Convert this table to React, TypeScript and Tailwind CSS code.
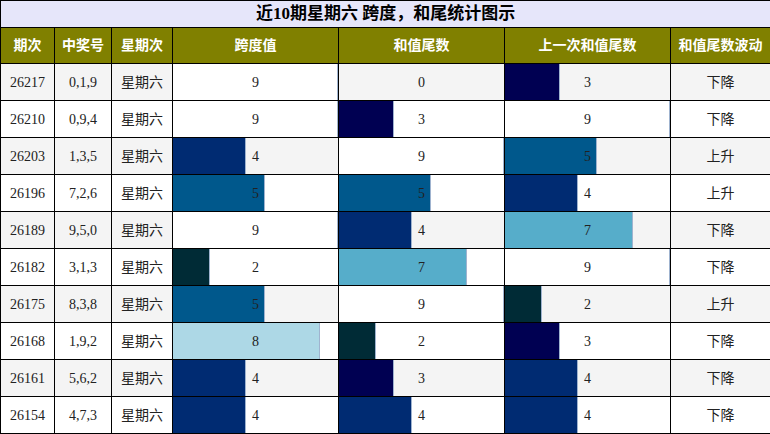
const rows: [string, string, number, number, number, string][] = [
  ["26217", "0,1,9", 9, 0, 3, "下降"],
  ["26210", "0,9,4", 9, 3, 9, "下降"],
  ["26203", "1,3,5", 4, 9, 5, "上升"],
  ["26196", "7,2,6", 5, 5, 4, "上升"],
  ["26189", "9,5,0", 9, 4, 7, "下降"],
  ["26182", "3,1,3", 2, 7, 9, "下降"],
  ["26175", "8,3,8", 5, 9, 2, "上升"],
  ["26168", "1,9,2", 8, 2, 3, "下降"],
  ["26161", "5,6,2", 4, 3, 4, "下降"],
  ["26154", "4,7,3", 4, 4, 4, "下降"],
]

// bar colour per digit
const barColors: Record<number, string> = {
  0: "bg-transparent",
  1: "bg-[#001f2a]",
  2: "bg-[#002b36]",
  3: "bg-[#000052]",
  4: "bg-[#002b72]",
  5: "bg-[#00588c]",
  6: "bg-[#1f7fae]",
  7: "bg-[#56adca]",
  8: "bg-[#add8e6]",
  9: "bg-white",
}

const font = "font-['Liberation_Serif','Noto_Sans_CJK_SC',serif]"

function BarCell({ value }: { value: number }) {
  return (
    <td className="border border-black p-0">
      <div className="relative h-[36px]">
        {value > 0 && (
          <div
            className={`absolute left-0 top-0 h-full border-r border-[#9fb3cf] ${barColors[value]}`}
            style={{ width: `${(value / 9) * 100}%` }}
          />
        )}
        <div className="relative flex h-full items-center justify-center">{value}</div>
      </div>
    </td>
  )
}

export default function App() {
  return (
    <div className={`w-[770px] h-[434px] bg-white ${font} text-[14px] text-[#222]`}>
      <table className="w-[770px] table-fixed border-collapse border border-black">
        <colgroup>
          <col className="w-[54px]" />
          <col className="w-[57px]" />
          <col className="w-[61px]" />
          <col className="w-[166px]" />
          <col className="w-[166px]" />
          <col className="w-[166px]" />
          <col className="w-[100px]" />
        </colgroup>
        <thead>
          <tr className="h-[27px] bg-[#e6e6fa]">
            <th colSpan={7} className="border border-black p-0 text-[17px] font-bold text-black">
              近10期星期六 跨度，和尾统计图示
            </th>
          </tr>
          <tr className="h-[36px] bg-[#808000] text-white">
            {["期次", "中奖号", "星期次", "跨度值", "和值尾数", "上一次和值尾数", "和值尾数波动"].map((h) => (
              <th key={h} className="border border-black p-0 text-[14px] font-bold">
                {h}
              </th>
            ))}
          </tr>
        </thead>
        <tbody>
          {rows.map((r, i) => (
            <tr key={r[0]} className={i % 2 === 0 ? "bg-[#f4f4f4]" : "bg-white"}>
              <td className="border border-black p-0 text-center">{r[0]}</td>
              <td className="border border-black p-0 text-center">{r[1]}</td>
              <td className="border border-black p-0 text-center">星期六</td>
              <BarCell value={r[2]} />
              <BarCell value={r[3]} />
              <BarCell value={r[4]} />
              <td className="border border-black p-0 text-center">{r[5]}</td>
            </tr>
          ))}
        </tbody>
      </table>
    </div>
  )
}
